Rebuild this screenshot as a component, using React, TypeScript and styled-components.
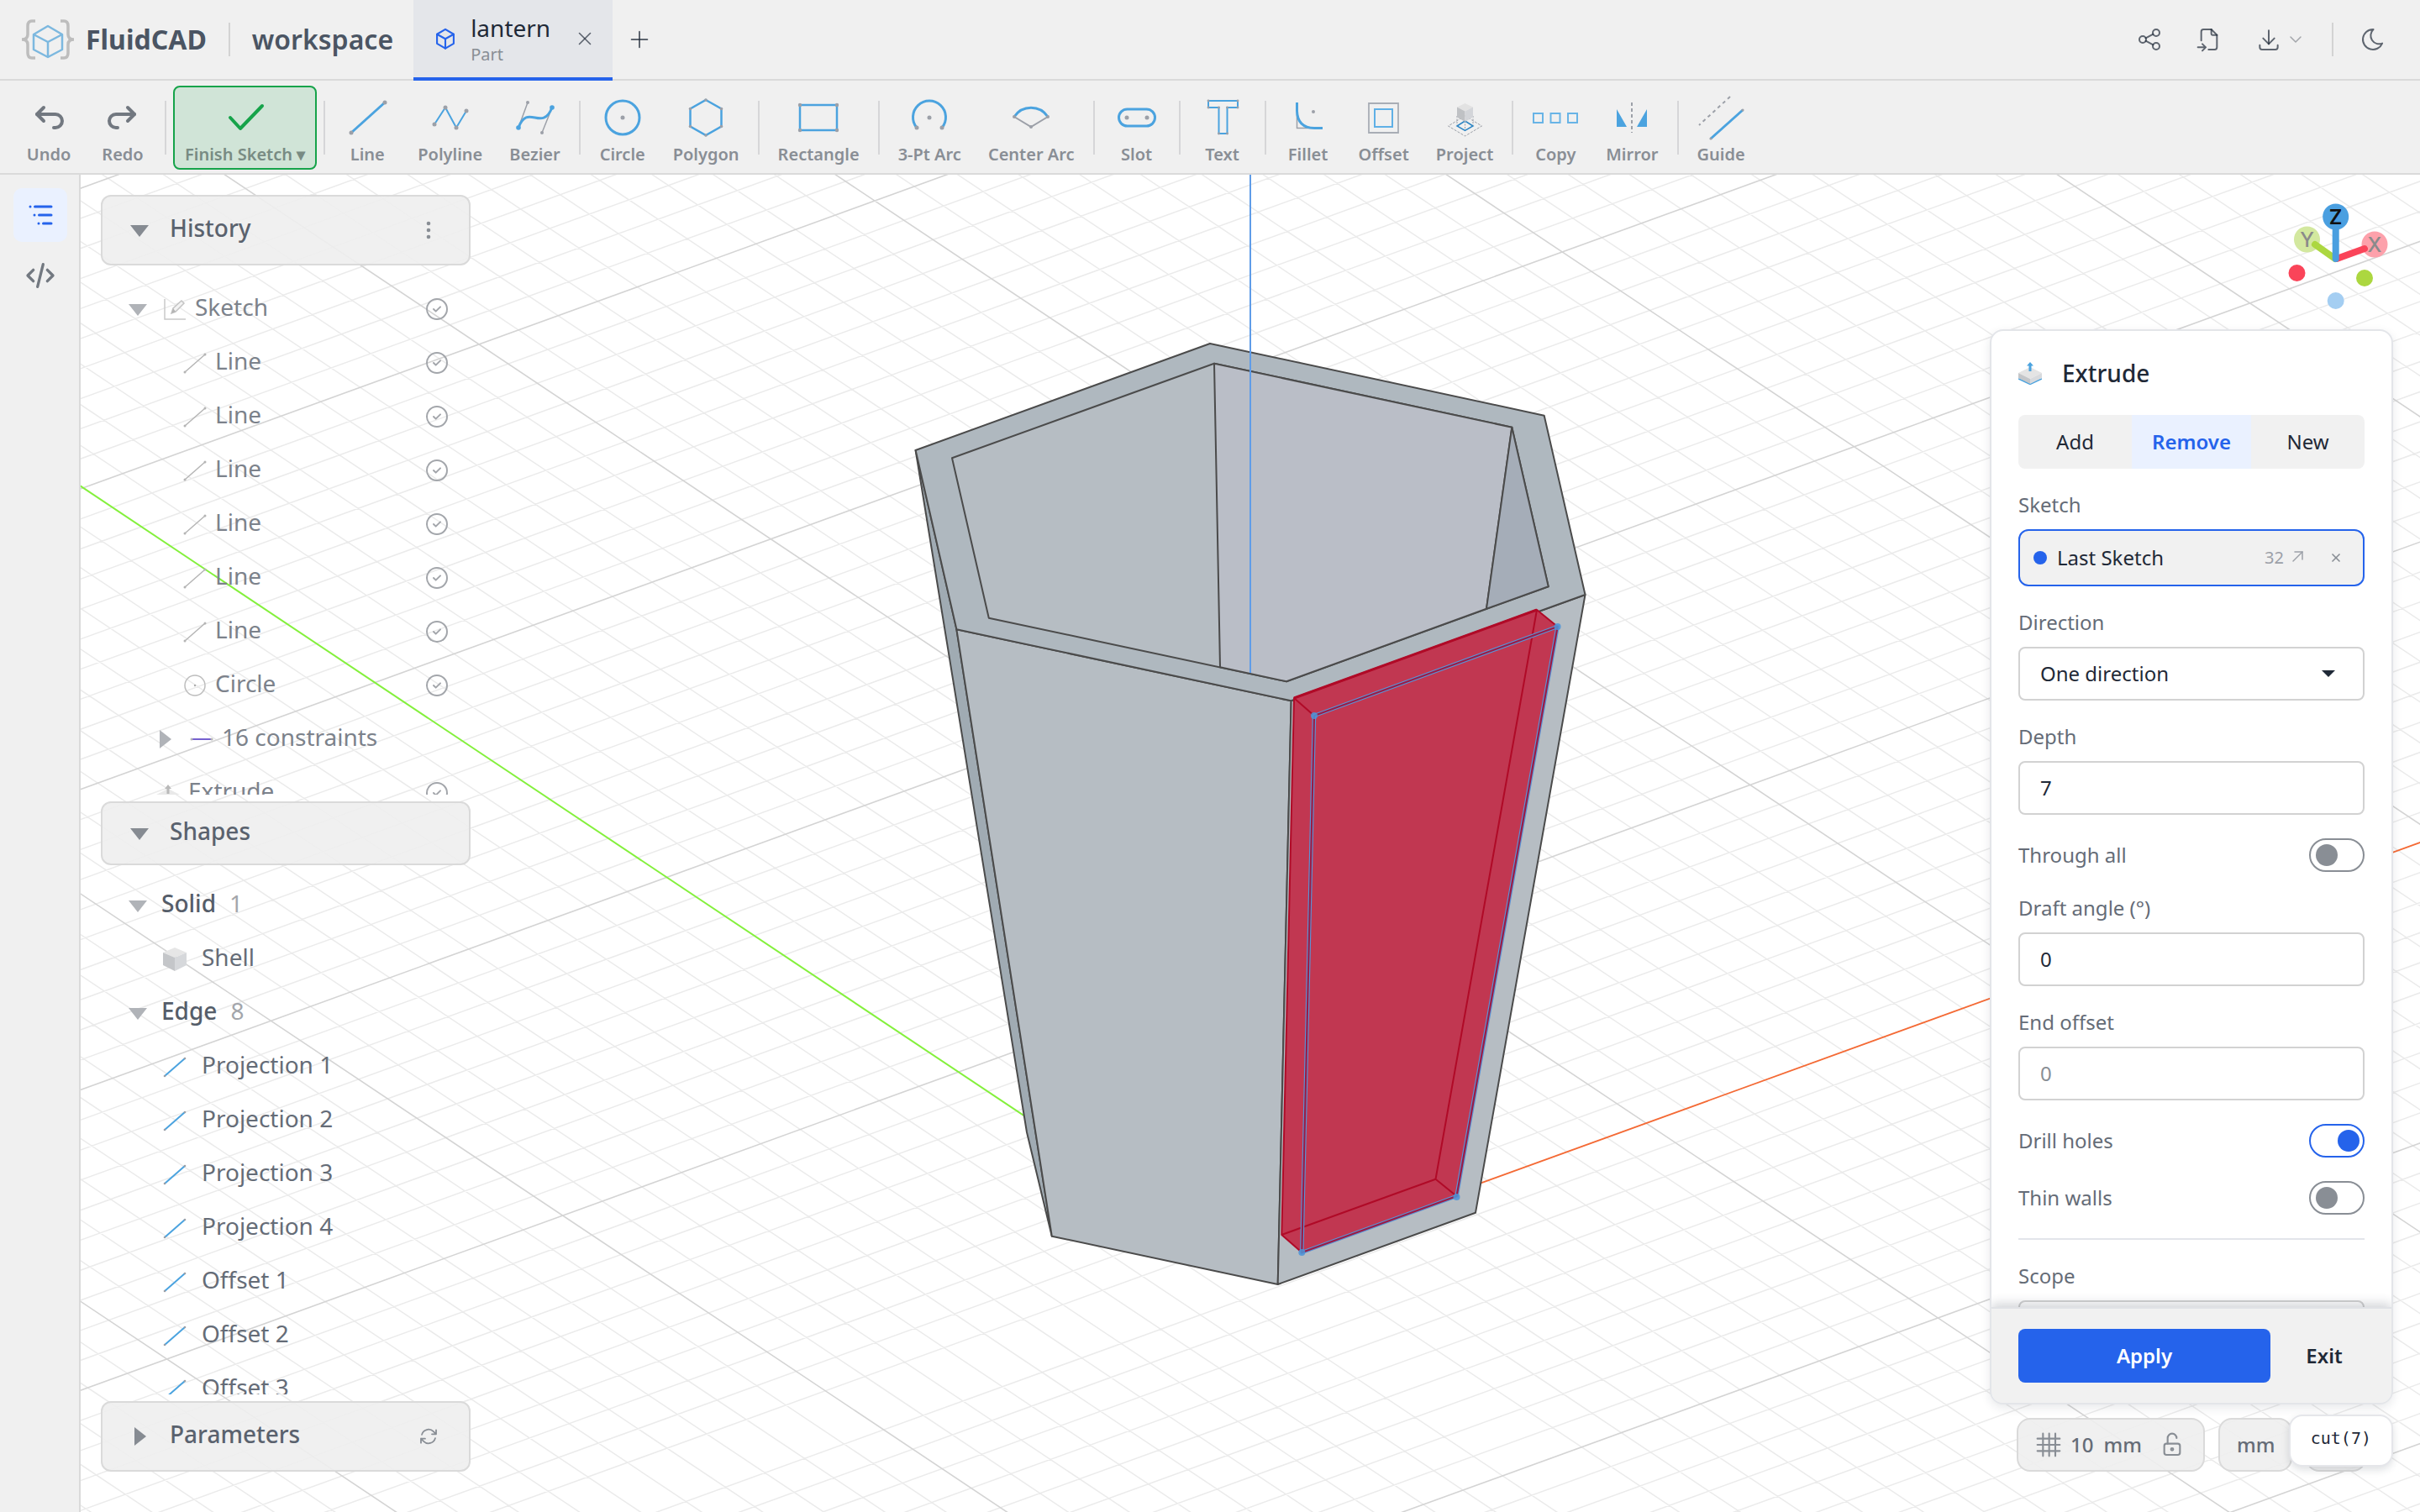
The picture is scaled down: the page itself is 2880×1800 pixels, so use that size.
import React from "react";
import styled, { createGlobalStyle } from "styled-components";

const c = {
  chrome: "#f0f0f0",
  line: "#dadada",
  ink: "#1f2937",
  text: "#4b5563",
  soft: "#656c77",
  mute: "#898e95",
  faint: "#a3a6ab",
  blue: "#2563eb",
  tint: "#eaf1ff",
  draw: "#4ba3df",
  dot: "#9ca0a8",
};

const Global = createGlobalStyle`
  *, *::before, *::after { box-sizing: border-box; }
  body { margin: 0; font-family: "Noto Sans", "Open Sans", sans-serif; font-size: 28px; color: ${c.ink}; background: #fff; }
  button, input, select { font: inherit; color: inherit; margin: 0; }
  button { border: 0; background: none; padding: 0; cursor: pointer; }
  ul { list-style: none; margin: 0; padding: 0; }
  svg { display: block; flex: none; }
`;

const Page = styled.div`
  display: grid;
  grid-template-rows: auto auto minmax(0, 1fr);
  height: 100vh;
`;

/* ---------- icons ---------- */

const Icon = ({ size = 32, stroke = 1.5, paths }: { size?: number; stroke?: number; paths: string[] }) => (
  <svg width={size} height={size} viewBox="0 0 24 24" fill="none" stroke="currentColor" strokeWidth={stroke} strokeLinecap="round" strokeLinejoin="round" aria-hidden="true">
    {paths.map((d) => <path key={d} d={d} />)}
  </svg>
);

const P = {
  share: ["M3 12a3 3 0 1 0 6 0a3 3 0 1 0 -6 0", "M15 6a3 3 0 1 0 6 0a3 3 0 1 0 -6 0", "M15 18a3 3 0 1 0 6 0a3 3 0 1 0 -6 0", "M8.7 10.7l6.6 -3.4", "M8.7 13.3l6.6 3.4"],
  fileImport: ["M14 3v4a1 1 0 0 0 1 1h4", "M5 13v-8a2 2 0 0 1 2 -2h7l5 5v11a2 2 0 0 1 -2 2h-5.5m-9.5 -2h7m-3 -3l3 3l-3 3"],
  download: ["M4 17v2a2 2 0 0 0 2 2h12a2 2 0 0 0 2 -2v-2", "M7 11l5 5l5 -5", "M12 4v12"],
  chevron: ["M6 9l6 6l6 -6"],
  moon: ["M12 3c.132 0 .263 0 .393 0a7.5 7.5 0 0 0 7.92 12.446a9 9 0 1 1 -8.313 -12.454z"],
  plus: ["M12 5v14", "M5 12h14"],
  close: ["M18 6l-12 12", "M6 6l12 12"],
  undo: ["M9 14l-4 -4l4 -4", "M5 10h11a4 4 0 1 1 0 8h-1"],
  redo: ["M15 14l4 -4l-4 -4", "M19 10h-11a4 4 0 1 0 0 8h1"],
  code: ["M7 8l-4 4l4 4", "M17 8l4 4l-4 4", "M14 4l-4 16"],
  checked: ["M3 12a9 9 0 1 0 18 0a9 9 0 1 0 -18 0", "M9 12l2 2l4 -4"],
  cube: ["M12 2.5l8.5 5v9.5l-8.5 5l-8.5 -5v-9.5z", "M12 12.2l8.5 -4.7", "M12 12.2v9.8", "M12 12.2l-8.5 -4.7"],
  refresh: ["M16.023 9.348h4.992v-.001M2.985 19.644v-4.992m0 0h4.992m-4.993 0 3.181 3.183a8.25 8.25 0 0 0 13.803-3.7M4.031 9.865a8.25 8.25 0 0 1 13.803-3.7l3.181 3.182m0-4.991v4.99"],
  grid: ["M7 2v20", "M12.5 2v20", "M18 2v20", "M2 6.5h20", "M2 12h20", "M2 17.5h20"],
  unlock: ["M5 13a2 2 0 0 1 2 -2h10a2 2 0 0 1 2 2v6a2 2 0 0 1 -2 2h-10a2 2 0 0 1 -2 -2z", "M11 16a1 1 0 1 0 2 0a1 1 0 1 0 -2 0", "M8 11v-5a4 4 0 0 1 8 0"],
  arrowOut: ["M7 17l11 -11", "M9 6h9v9"],
};

const Tool56 = ({ children }: { children: React.ReactNode }) => (
  <svg width="56" height="56" viewBox="0 0 56 56" fill="none" stroke={c.draw} strokeWidth="3" aria-hidden="true">{children}</svg>
);

const Dots = ({ at, r = 2.5 }: { at: number[][]; r?: number }) => (
  <g fill={c.dot} stroke="none">{at.map(([x, y]) => <circle key={`${x},${y}`} cx={x} cy={y} r={r} />)}</g>
);

const art: Record<string, React.ReactNode> = {
  Line: <><path d="M9 46L49 10" /><Dots at={[[9, 46], [49, 10]]} /></>,
  Polyline: <><path d="M9 36L22 16L35 40L47 20" strokeWidth="2" /><Dots at={[[9, 36], [22, 16], [35, 40], [47, 20]]} /></>,
  Bezier: (
    <>
      <path d="M8 40L19 10M48 16L36 46" stroke={c.dot} strokeWidth="1.5" />
      <path d="M8 40C19 10 36 46 48 16" />
      <Dots at={[[19, 10], [36, 46]]} r={2} />
      <g fill={c.draw} stroke="none"><circle cx="8" cy="40" r="2.8" /><circle cx="48" cy="16" r="2.8" /></g>
    </>
  ),
  Circle: <><circle cx="28" cy="28" r="20" /><Dots at={[[28, 28]]} /></>,
  Polygon: <><path d="M28 7L46.500 17.500V38.500L28 49L9.500 38.500V17.500Z" strokeWidth="2.500" /><Dots r={1.8} at={[[28, 7], [46.5, 17.5], [46.5, 38.5], [28, 49], [9.5, 38.5], [9.5, 17.5]]} /></>,
  Rectangle: <><path d="M6 13H50V43H6Z" strokeWidth="2.500" /><Dots at={[[6, 13], [50, 13], [50, 43], [6, 43]]} r={2.2} /></>,
  "3-Pt Arc": <><path d="M13 40A19.500 19.500 0 1 1 43 40" /><Dots at={[[13, 40], [43, 40], [28, 28]]} /></>,
  "Center Arc": <><path d="M8 27L28 39L48 27" stroke={c.dot} strokeWidth="2" /><path d="M8 27A24 24 0 0 1 48 27" /><Dots at={[[28, 39], [8, 27], [48, 27]]} r={2} /></>,
  Slot: <><rect x="6.500" y="18" width="43" height="20" rx="10" /><Dots at={[[16, 28], [40, 28]]} /></>,
  Text: <><path d="M11 8H46V16H33.500V47H23.500V16H11Z" strokeWidth="2" /><Dots at={[[11, 8], [46, 8], [46, 16], [33.5, 16], [33.5, 47], [23.5, 47], [23.5, 16], [11, 16]]} r={1.4} /></>,
  Fillet: <><path d="M14.500 22V40.500H34" stroke={c.dot} strokeWidth="1.500" /><path d="M14.500 10V20Q15 40 35 40.500H45" /><Dots at={[[34, 21]]} r={2} /></>,
  Offset: <><path d="M10 11H45V46H10Z" stroke="#a8adb5" strokeWidth="1.800" /><path d="M17 18H38V39H17Z" strokeWidth="2" stroke="#5fb0e6" /></>,
  Project: (
    <g strokeWidth="1">
      <path d="M28.500 26L48.500 38L28.500 50L8.500 38Z" stroke={c.dot} strokeDasharray="3 1.500" />
      <path d="M19 26V37M38 26V37M28.500 32V43" stroke={c.dot} strokeDasharray="2 1.500" />
      <path d="M28.500 32L38 38L28.500 43.500L19 38Z" strokeWidth="1.500" stroke="#2f86c4" />
      <path d="M28.500 11L38 15.500L28.500 20.500L19 15.500Z" fill="#e2e2e2" stroke="none" />
      <path d="M19 15.500L28.500 20.500V33L19 27.500Z" fill="#bfc1c4" stroke="none" />
      <path d="M38 15.500L28.500 20.500V33L38 27.500Z" fill="#d3d5d9" stroke="none" />
    </g>
  ),
  Copy: <g strokeWidth="2" stroke="#68b4e6"><path d="M2 23H13V34H2ZM22.500 23H33.500V34H22.500ZM43 23H54V34H43Z" /></g>,
  Mirror: <><path d="M10 18V39H22ZM46 18V39H34Z" fill={c.draw} stroke="none" /><path d="M28 10V46" stroke={c.dot} strokeWidth="2" strokeDasharray="4 3" /></>,
  Guide: <><path d="M39 3L2 37" stroke={c.dot} strokeWidth="2" strokeDasharray="4 4" /><path d="M54 19L16 53" /><Dots at={[[54, 19], [16, 53]]} r={1.6} /></>,
};

/* ---------- header ---------- */

const Header = styled.header`
  display: flex;
  align-items: center;
  height: 96px;
  padding: 0 40px 0 24px;
  background: ${c.chrome};
  border-bottom: 2px solid ${c.line};
`;

const Brand = styled.div<{ $weight: number }>`
  font-size: 32px;
  line-height: 48px;
  font-weight: ${(p) => p.$weight};
  color: ${c.text};
`;

const Rule = styled.span<{ $gap: number }>`
  width: 2px;
  height: 40px;
  margin: 0 ${(p) => p.$gap}px;
  background: #d3d3d3;
`;

const Tab = styled.div`
  display: flex;
  align-items: center;
  align-self: stretch;
  gap: 16px;
  margin: 0 16px -2px 24px;
  padding: 0 20px 0 24px;
  background: #e4e6ea;
  border-bottom: 4px solid ${c.blue};
  color: ${c.blue};
`;

const TabText = styled.div`
  display: grid;
  gap: 2px;
  margin-right: 12px;
  color: ${c.ink};
  font-size: 28px;
  line-height: 36px;
`;

const TabKind = styled.span`
  font-size: 20px;
  line-height: 24px;
  color: ${c.mute};
`;

const Plain = styled.button`
  display: flex;
  align-items: center;
  gap: 4px;
  color: rgba(31, 41, 55, 0.7);
`;

const Faint = styled.span`
  color: ${c.faint};
`;

const Actions = styled.div`
  display: flex;
  align-items: center;
  gap: 39px;
  margin-left: auto;
`;

const Logo = () => (
  <svg width="66" height="48" viewBox="0 0 66 48" fill="none" aria-hidden="true">
    <g stroke="#bdbdbd" strokeWidth="3.500">
      <path d="M18 2H14Q9 2 9 8V18Q9 24 2 24Q9 24 9 30V40Q9 46 14 46H18" />
      <path d="M48 2H52Q57 2 57 8V18Q57 24 64 24Q57 24 57 30V40Q57 46 52 46H48" />
    </g>
    <path d="M33 8L50 18V36L33 45L16 36V18ZM16 18L33 27L50 18M33 27V45" stroke="#7cb8df" strokeWidth="2.500" strokeLinejoin="round" />
  </svg>
);

const LogoBox = styled.a`
  display: flex;
  margin-right: 12px;
`;

/* ---------- toolbar ---------- */

const Toolbar = styled.nav`
  display: flex;
  align-items: center;
  gap: 4px;
  height: 112px;
  padding: 6px 16px 4px;
  background: ${c.chrome};
  border-bottom: 2px solid ${c.line};
`;

const Tool = styled.button<{ $on?: boolean }>`
  display: flex;
  flex-direction: column;
  align-items: center;
  gap: 4px;
  padding: 8px 12px 4px;
  border: 2px solid ${(p) => (p.$on ? "#16a34a" : "transparent")};
  border-radius: 8px;
  background: ${(p) => (p.$on ? "#d0e4d7" : "transparent")};
  color: ${(p) => (p.$on ? "#788b83" : c.mute)};
  font-size: 20px;
  line-height: 24px;
  font-weight: 600;
  white-space: nowrap;
`;

const Glyph = styled.span`
  display: grid;
  place-items: center;
  width: 56px;
  height: 56px;
  color: #727880;
`;

const Sep = styled.span`
  width: 2px;
  height: 64px;
  margin: 0 4px;
  background: #d6d6d8;
`;

const groups = [
  ["Line", "Polyline", "Bezier"],
  ["Circle", "Polygon"],
  ["Rectangle"],
  ["3-Pt Arc", "Center Arc"],
  ["Slot"],
  ["Text"],
  ["Fillet", "Offset", "Project"],
  ["Copy", "Mirror"],
  ["Guide"],
];

/* ---------- workspace ---------- */

const Body = styled.div`
  display: flex;
  min-height: 0;
`;

const Side = styled.aside`
  display: flex;
  flex-direction: column;
  gap: 8px;
  width: 96px;
  padding: 16px 0 0 16px;
  background: ${c.chrome};
  border-right: 2px solid ${c.line};
`;

const SideButton = styled.button<{ $on?: boolean }>`
  display: grid;
  place-items: center;
  width: 64px;
  height: 64px;
  border-radius: 10px;
  background: ${(p) => (p.$on ? c.tint : "transparent")};
  color: ${(p) => (p.$on ? c.blue : "#727880")};
`;

const Stage = styled.main`
  position: relative;
  flex: 1;
  min-width: 0;
  overflow: hidden;
`;

const Scene = styled.svg`
  position: absolute;
  inset: 0;
  width: 100%;
  height: 100%;
`;

const Overlay = styled.div`
  position: relative;
  display: flex;
  justify-content: space-between;
  height: 100%;
  padding: 24px 32px 48px 24px;
`;

const Column = styled.div<{ $width: number }>`
  display: flex;
  flex-direction: column;
  width: ${(p) => p.$width}px;
  min-height: 0;
`;

const PanelHead = styled.div<{ $tall?: boolean }>`
  display: flex;
  align-items: center;
  flex: none;
  height: ${(p) => (p.$tall ? 84 : 76)}px;
  padding: 0 36px 0 30px;
  border: 2px solid ${c.line};
  border-radius: 12px;
  background: rgba(238, 238, 238, 0.9);
  color: ${c.mute};
`;

const PanelToggle = styled.button`
  display: flex;
  align-items: center;
  gap: 22px;
  flex: 1;
  text-align: left;
  line-height: 36px;
  color: #5a626e;
  font-weight: 500;
`;

const Tree = styled.ul<{ $top: number }>`
  flex: 1 1 0;
  min-height: 0;
  overflow: hidden;
  margin-bottom: 8px;
  & > li:first-child { margin-top: ${(p) => p.$top}px; }
`;

const Row = styled.li<{ $indent: number; $tone?: string; $weight?: number }>`
  display: flex;
  align-items: center;
  height: 64px;
  padding-left: ${(p) => p.$indent}px;
  padding-right: 24px;
  color: ${(p) => p.$tone || "#7c828b"};
  font-weight: ${(p) => p.$weight || 400};
`;

const Slot28 = styled.span<{ $gap: number }>`
  display: grid;
  place-items: center;
  width: 28px;
  height: 64px;
  margin-right: ${(p) => p.$gap}px;
  color: ${c.faint};
`;

const Label = styled.span`
  line-height: 36px;
  padding-bottom: 6px;
`;

const Count = styled(Label)`
  margin-left: 16px;
  font-weight: 400;
  color: ${c.faint};
`;

const RowAction = styled.button`
  margin-left: auto;
  color: ${c.faint};
`;

const Caret = ({ open = true, tone = "#b0b3b8" }: { open?: boolean; tone?: string }) => (
  <svg width="28" height="28" viewBox="0 0 28 28" fill={tone} aria-hidden="true">
    <path d={open ? "M3 8H25L14 22Z" : "M8 3L22 14L8 25Z"} />
  </svg>
);

const Mark = ({ kind }: { kind: string }) => (
  <svg width="28" height="28" viewBox="0 0 28 28" fill="none" strokeWidth="1.500" aria-hidden="true">
    {kind === "line" && <><path d="M2 25L26 4" stroke="#b5b5b5" /><g fill="#b5b5b5"><circle cx="2" cy="25" r="1.500" /><circle cx="26" cy="4" r="1.500" /></g></>}
    {kind === "edge" && <><path d="M2 25L26 4" stroke={c.draw} strokeWidth="2" /><g fill={c.dot}><circle cx="2" cy="25" r="1.300" /><circle cx="26" cy="4" r="1.300" /></g></>}
    {kind === "circle" && <><circle cx="14" cy="14" r="12" stroke="#bdbdbd" /><circle cx="14" cy="14" r="1.200" fill="#aaa" /></>}
    {kind === "sketch" && <><path d="M2 2V26H27" stroke="#c9c9c9" /><path d="M10 19L12 13L22 4L25 7L15 17Z" stroke="#c4c4c4" fill="#f3f3f3" /><path d="M10 19L12 13L15 17Z" fill="#b5b5b5" /></>}
    {kind === "rule" && <><path d="M2 14H26" stroke="#7560cf" strokeWidth="2" /><g fill="#b5b5b5"><circle cx="2" cy="14" r="1.500" /><circle cx="26" cy="14" r="1.500" /></g></>}
    {kind === "solid" && <><path d="M14 0L28 6L14 12L0 6Z" fill="#e6e6e6" /><path d="M0 6L14 12V28L0 21Z" fill="#c4c6c9" /><path d="M28 6L14 12V28L28 21Z" fill="#d6d8db" /></>}
    {kind === "extrude" && <><path d="M0 16L14 9L28 16L14 23Z" fill="#e9e9e9" /><path d="M0 16L14 23V28L0 21Z" fill="#d0d0d0" /><path d="M28 16L14 23V28L28 21Z" fill="#dedede" /><path d="M14 4L18 9H15.500V15H12.500V9H10Z" fill="#b9b9b9" /></>}
    {kind === "extrudeColor" && <><path d="M0 21L14 27.500L28 21L14 26Z" fill={c.draw} stroke={c.draw} /><path d="M0 14L14 7L28 14L14 21Z" fill="#e4e4e4" /><path d="M0 14L14 21V27L0 20Z" fill="#c4c6c9" /><path d="M28 14L14 21V27L28 20Z" fill="#d8dadd" /><path d="M14 1L18 5.500H15.500V12H12.500V5.500H10Z" fill={c.draw} /></>}
  </svg>
);

const History = () => (
  <Tree $top={20}>
    <Row $indent={30}>
      <Slot28 $gap={16}><Caret /></Slot28>
      <Slot28 $gap={10}><Mark kind="sketch" /></Slot28>
      <Label>Sketch</Label>
      <RowAction aria-label="Toggle Sketch"><Icon paths={P.checked} /></RowAction>
    </Row>
    {["Line", "Line", "Line", "Line", "Line", "Line", "Circle"].map((name, i) => (
      <Row key={i} $indent={98}>
        <Slot28 $gap={10}><Mark kind={name.toLowerCase()} /></Slot28>
        <Label>{name}</Label>
        <RowAction aria-label={`Toggle ${name}`}><Icon paths={P.checked} /></RowAction>
      </Row>
    ))}
    <Row $indent={62}>
      <Slot28 $gap={16}><Caret open={false} /></Slot28>
      <Slot28 $gap={10}><Mark kind="rule" /></Slot28>
      <Label>16 constraints</Label>
    </Row>
    <Row $indent={66}>
      <Slot28 $gap={10}><Mark kind="extrude" /></Slot28>
      <Label>Extrude</Label>
      <RowAction aria-label="Toggle Extrude"><Icon paths={P.checked} /></RowAction>
    </Row>
  </Tree>
);

const ShapeGroup = ({ name, count }: { name: string; count: number }) => (
  <Row $indent={30} $tone="#555d69" $weight={500}>
    <Slot28 $gap={14}><Caret /></Slot28>
    <Label>{name}</Label>
    <Count>{count}</Count>
  </Row>
);

const ShapeItem = ({ name, kind }: { name: string; kind: string }) => (
  <Row $indent={74} $tone={c.soft}>
    <Slot28 $gap={18}><Mark kind={kind} /></Slot28>
    <Label>{name}</Label>
  </Row>
);

const edges = ["Projection 1", "Projection 2", "Projection 3", "Projection 4", "Offset 1", "Offset 2", "Offset 3"];

/* ---------- 3D scene ---------- */

const ORIGIN = { x: 1488, y: 1508 };
const CELL = 58.52;
const EX = { x: 0.8049 * CELL, y: -0.292 * CELL };
const EY = { x: -0.5934 * CELL, y: -0.3961 * CELL };

const gridPath = (major: boolean) => {
  const out: string[] = [];
  for (let i = -70; i <= 70; i++) {
    if (i === 0 || (i % 10 === 0) !== major) continue;
    const seg = (a: typeof EX, b: typeof EX) => {
      const bx = ORIGIN.x + a.x * i;
      const by = ORIGIN.y + a.y * i;
      out.push(`M${(bx - b.x * 80).toFixed(1)} ${(by - b.y * 80).toFixed(1)}L${(bx + b.x * 80).toFixed(1)} ${(by + b.y * 80).toFixed(1)}`);
    };
    seg(EX, EY);
    seg(EY, EX);
  }
  return out.join("");
};

const axisEnd = (v: typeof EX, n: number) => ({ x: ORIGIN.x + v.x * n, y: ORIGIN.y + v.y * n });
const xEnd = axisEnd(EX, 60);
const yEnd = axisEnd(EY, 60);

const Lantern = () => (
  <g strokeLinejoin="round">
    <g stroke="#4b4b4b" strokeWidth="2">
      <path d="M1089.600 536L1138.400 749.300L1251.800 1471.700L1222 1348Z" fill="#a0abb3" />
      <path d="M1138.400 749.300L1536.600 834.300L1520.700 1529L1251.800 1471.700Z" fill="#b6bdc3" />
      <path d="M1536.600 834.300L1886.500 708L1756 1443.700L1520.700 1529Z" fill="#b6bdc3" />
      <path d="M1440 409L1837.700 494.700L1886.500 708L1536.600 834.300L1138.400 749.300L1089.600 536Z" fill="#afb8bf" />
      <path d="M1445 432.700L1799.300 508.700L1842.700 698.300L1531 811.300L1176.800 735.700L1133 545.300Z" fill="#b6bdc3" />
      <path d="M1445 432.700L1799.300 508.700L1769 724.700L1531 811.300L1452 794.300Z" fill="#babec7" />
      <path d="M1799.300 508.700L1842.700 698.300L1769 724.700Z" fill="#a5adb8" />
    </g>
    <path d="M1488 208V801" stroke="#5f9ce8" strokeWidth="2" />
    <path d="M1540 831L1829 726L1853.600 746L1733.500 1424L1549.300 1491L1525.300 1470Z" fill="#c13751" />
    <g fill="none" stroke="#b00a27" strokeWidth="2">
      <path d="M1540 831L1829 726L1853.600 746M1829 726L1708.500 1403.700L1525.300 1470L1540 831L1564 852M1708.500 1403.700L1733.500 1424M1525.300 1470L1549.300 1491" />
      <path d="M1540 831L1829 726" strokeWidth="3" />
      <path d="M1564 852L1853.600 746L1733.500 1424L1549.300 1491Z" stroke="#5b93d6" strokeWidth="4.500" />
      <path d="M1564 852L1853.600 746L1733.500 1424L1549.300 1491Z" stroke="#9c1b44" strokeWidth="2.200" />
    </g>
    <g fill="#4d95d8" opacity="0.85">
      <circle cx="1564" cy="852" r="4" /><circle cx="1853.600" cy="746" r="4" /><circle cx="1733.500" cy="1425" r="4" /><circle cx="1549.300" cy="1491" r="4" />
    </g>
  </g>
);

const Viewport = () => (
  <Scene viewBox="96 208 2784 1592" preserveAspectRatio="xMidYMid slice" aria-label="3D viewport">
    <path d={gridPath(false)} stroke="#ebebeb" strokeWidth="1.500" />
    <path d={gridPath(true)} stroke="#d4d4d4" strokeWidth="1.600" />
    <path d={`M${ORIGIN.x} ${ORIGIN.y}L${yEnd.x} ${yEnd.y}`} stroke="#84f03c" strokeWidth="2" />
    <path d={`M${ORIGIN.x} ${ORIGIN.y}L${xEnd.x} ${xEnd.y}`} stroke="#f46a35" strokeWidth="1.800" />
    <Lantern />
  </Scene>
);

const GizmoBox = styled.div`
  display: flex;
  justify-content: flex-end;
  flex: none;
  height: 160px;
`;

const Gizmo = () => (
  <svg width="136" height="160" viewBox="2712 232 136 160" fontFamily='Inter, "Liberation Sans", sans-serif' fontSize="24" textAnchor="middle" aria-label="View orientation">
    <circle cx="2745.500" cy="285" r="15.500" fill="#d3e89f" />
    <circle cx="2826" cy="291" r="15.500" fill="#fda1ab" />
    <text x="2745.500" y="294" fill="#8a8a8a" fontWeight="500">Y</text>
    <text x="2826" y="300" fill="#8a8a8a" fontWeight="500">X</text>
    <g strokeWidth="8" strokeLinecap="round">
      <path d="M2755 291L2779 308" stroke="#acd740" />
      <path d="M2814 296L2781 308" stroke="#fa4459" />
      <path d="M2779.700 262V308" stroke="#4a9fe0" />
    </g>
    <circle cx="2779.700" cy="258" r="15.500" fill="#4a9fe0" />
    <text x="2779.700" y="267" fill="#111" fontWeight="600">Z</text>
    <circle cx="2733.500" cy="325" r="10" fill="#fa4459" />
    <circle cx="2814" cy="331" r="10" fill="#acd740" />
    <circle cx="2779.700" cy="358" r="10" fill="#a4cef2" />
  </svg>
);

/* ---------- extrude panel ---------- */

const Card = styled.section`
  display: flex;
  flex-direction: column;
  flex: 1;
  min-height: 0;
  overflow: hidden;
  border: 2px solid #e3e5e9;
  border-radius: 16px;
  background: #fff;
  box-shadow: 0 4px 12px rgba(30, 40, 60, 0.1);
  font-size: 24px;
  margin-bottom: 16px;
`;

const Form = styled.form`
  display: flex;
  flex-direction: column;
  gap: 28px;
  flex: 1;
  min-height: 0;
  overflow: hidden;
  padding: 32px 32px 0;
  & > * { flex: none; }
`;

const Title = styled.h2`
  display: flex;
  align-items: center;
  gap: 24px;
  margin: 0 0 4px;
  font-size: 28px;
  line-height: 36px;
  font-weight: 500;
`;

const Segments = styled.div`
  display: flex;
  height: 64px;
  overflow: hidden;
  border-radius: 8px;
  background: #f1f1f1;
`;

const Segment = styled.button<{ $on?: boolean }>`
  flex: 1 1 0;
  padding: 0 24px 2px;
  background: ${(p) => (p.$on ? c.tint : "transparent")};
  color: ${(p) => (p.$on ? c.blue : c.ink)};
  font-weight: ${(p) => (p.$on ? 600 : 400)};
`;

const Field = styled.div`
  display: grid;
  gap: 14px;
`;

const FieldLabel = styled.label`
  line-height: 30px;
  color: ${c.soft};
`;

const control = `
  width: 100%;
  height: 64px;
  padding: 0 24px 2px;
  border: 2px solid #d2d2d2;
  border-radius: 8px;
  background: #fff;
  outline: 0;
`;

const Input = styled.input`
  ${control}
  &::placeholder { color: ${c.mute}; opacity: 1; }
`;

const SelectWrap = styled.div`
  display: grid;
  align-items: center;
  & > * { grid-area: 1 / 1; }
  & > svg { justify-self: end; margin-right: 35px; pointer-events: none; }
`;

const Select = styled.select`
  ${control}
  appearance: none;
`;

const Pick = styled.div`
  display: flex;
  align-items: center;
  height: 68px;
  padding: 0 24px 0 16px;
  border: 2px solid ${c.blue};
  border-radius: 12px;
  background: #f1f1f1;
`;

const PickName = styled.span`
  padding-bottom: 2px;
`;

const PickDot = styled.span`
  width: 16px;
  height: 16px;
  margin-right: 12px;
  border-radius: 50%;
  background: ${c.blue};
`;

const PickRef = styled.button`
  display: flex;
  align-items: center;
  gap: 4px;
  margin: 0 26px 0 auto;
  padding-bottom: 2px;
  font-size: 20px;
  color: ${c.dot};
`;

const PickClear = styled.button`
  color: ${c.mute};
`;

const SwitchRow = styled.label`
  display: flex;
  align-items: center;
  justify-content: space-between;
  height: 40px;
  color: ${c.soft};
`;

const Caption = styled.span`
  padding-bottom: 2px;
`;

const Switch = styled.input.attrs({ type: "checkbox", role: "switch" })`
  appearance: none;
  display: flex;
  align-items: center;
  width: 66px;
  height: 40px;
  padding: 0 4px 0 6px;
  border: 2px solid ${c.mute};
  border-radius: 20px;
  &::before { content: ""; width: 26px; height: 26px; border-radius: 50%; background: ${c.mute}; }
  &:checked { justify-content: flex-end; border-color: ${c.blue}; }
  &:checked::before { background: ${c.blue}; }
`;

const Divider = styled.hr`
  width: 100%;
  height: 2px;
  margin: 0;
  border: 0;
  background: #e3e5ea;
`;

const Footer = styled.footer`
  position: relative;
  display: flex;
  gap: 16px;
  padding: 24px 32px;
  border-top: 2px solid #e0e2e6;
  background: #f1f1f1;
  box-shadow: 0 -4px 12px rgba(30, 40, 60, 0.2);
`;

const Apply = styled.button`
  flex: 1;
  height: 64px;
  padding-bottom: 2px;
  border-radius: 8px;
  background: ${c.blue};
  color: #fff;
  font-weight: 600;
`;

const Exit = styled.button`
  width: 96px;
  padding-bottom: 2px;
  font-weight: 600;
`;

const StatusBar = styled.div`
  position: relative;
  display: flex;
  justify-content: space-between;
  flex: none;
  height: 64px;
  padding: 0 32px;
`;

const Pill = styled.button<{ $width?: number }>`
  display: flex;
  align-items: center;
  width: ${(p) => (p.$width ? `${p.$width}px` : "auto")};
  padding: 0 20px;
  border: 2px solid ${c.line};
  border-radius: 16px;
  background: rgba(238, 238, 238, 0.9);
  color: ${c.mute};
  font-size: 24px;
  font-weight: 500;
`;

const PillText = styled.span<{ $before?: number; $after?: number }>`
  margin-left: ${(p) => p.$before || 0}px;
  margin-right: ${(p) => p.$after || 0}px;
  padding-bottom: 2px;
  color: ${c.soft};
`;

const Tip = styled.output`
  position: absolute;
  top: -4px;
  right: 0;
  padding: 12px 24px 18px;
  border: 2px solid #e5e6ea;
  border-radius: 16px;
  background: #fff;
  box-shadow: 0 4px 10px rgba(30, 40, 60, 0.14);
  font: 20px/28px "DejaVu Sans Mono", monospace;
`;

const NumberField = ({ id, label, value, placeholder }: { id: string; label: string; value?: string; placeholder?: string }) => (
  <Field>
    <FieldLabel htmlFor={id}>{label}</FieldLabel>
    <Input id={id} inputMode="decimal" defaultValue={value} placeholder={placeholder} />
  </Field>
);

const Toggle = ({ label, on }: { label: string; on?: boolean }) => (
  <SwitchRow>
    <Caption>{label}</Caption>
    <Switch defaultChecked={on} />
  </SwitchRow>
);

const ExtrudePanel = () => (
  <Card>
    <Form>
      <Title><Mark kind="extrudeColor" />Extrude</Title>
      <Segments>
        <Segment type="button">Add</Segment>
        <Segment type="button" $on>Remove</Segment>
        <Segment type="button">New</Segment>
      </Segments>
      <Field>
        <FieldLabel as="span">Sketch</FieldLabel>
        <Pick>
          <PickDot />
          <PickName>Last Sketch</PickName>
          <PickRef type="button">32<Icon size={24} stroke={1.5} paths={P.arrowOut} /></PickRef>
          <PickClear type="button" aria-label="Clear sketch"><Icon size={16} stroke={2.5} paths={P.close} /></PickClear>
        </Pick>
      </Field>
      <Field>
        <FieldLabel htmlFor="direction">Direction</FieldLabel>
        <SelectWrap>
          <Select id="direction" defaultValue="one">
            <option value="one">One direction</option>
          </Select>
          <svg width="16" height="8" viewBox="0 0 16 8" fill={c.ink}><path d="M0 0H16L8 8Z" /></svg>
        </SelectWrap>
      </Field>
      <NumberField id="depth" label="Depth" value="7" />
      <Toggle label="Through all" />
      <NumberField id="draft" label="Draft angle (°)" value="0" />
      <NumberField id="end" label="End offset" placeholder="0" />
      <Toggle label="Drill holes" on />
      <Toggle label="Thin walls" />
      <Divider />
      <NumberField id="scope" label="Scope" />
    </Form>
    <Footer>
      <Apply>Apply</Apply>
      <Exit>Exit</Exit>
    </Footer>
  </Card>
);

export default function App() {
  return (
    <Page>
      <Global />
      <Header>
        <LogoBox href="#" aria-label="FluidCAD home"><Logo /></LogoBox>
        <Brand $weight={700}>FluidCAD</Brand>
        <Rule $gap={26} />
        <Brand $weight={600}>workspace</Brand>
        <Tab>
          <Icon size={28} stroke={1.8} paths={P.cube} />
          <TabText>lantern<TabKind>Part</TabKind></TabText>
          <Plain aria-label="Close tab"><Icon size={26} paths={P.close} /></Plain>
        </Tab>
        <Plain aria-label="New tab"><Icon size={32} paths={P.plus} /></Plain>
        <Actions>
          <Plain aria-label="Share"><Icon paths={P.share} /></Plain>
          <Plain aria-label="Import"><Icon paths={P.fileImport} /></Plain>
          <Plain aria-label="Export"><Icon paths={P.download} /><Faint><Icon size={24} paths={P.chevron} /></Faint></Plain>
          <Rule $gap={-8} />
          <Plain aria-label="Dark mode"><Icon paths={P.moon} /></Plain>
        </Actions>
      </Header>
      <Toolbar>
        <Tool><Glyph><Icon size={48} stroke={2} paths={P.undo} /></Glyph>Undo</Tool>
        <Tool><Glyph><Icon size={48} stroke={2} paths={P.redo} /></Glyph>Redo</Tool>
        <Sep />
        <Tool $on>
          <Tool56><path d="M10 28L22 41L48 14" stroke="#16a34a" strokeWidth="4" strokeLinecap="round" strokeLinejoin="round" /></Tool56>
          <span>Finish Sketch ▾</span>
        </Tool>
        {groups.map((g) => (
          <React.Fragment key={g[0]}>
            <Sep />
            {g.map((name) => <Tool key={name}><Tool56>{art[name]}</Tool56>{name}</Tool>)}
          </React.Fragment>
        ))}
      </Toolbar>
      <Body>
        <Side>
          <SideButton $on aria-label="Model tree">
            <svg width="32" height="28" viewBox="0 0 32 28" stroke="currentColor" strokeWidth="3" strokeLinecap="round">
              <path d="M4 4h.01M9.500 4H29M9 14h.01M14.500 14H29M14 24h.01M19.500 24H29" />
            </svg>
          </SideButton>
          <SideButton aria-label="Code"><Icon size={40} stroke={2} paths={P.code} /></SideButton>
        </Side>
        <Stage>
          <Viewport />
          <Overlay>
            <Column $width={440}>
              <PanelHead $tall>
                <PanelToggle><Caret tone="#868b92" /><Label>History</Label></PanelToggle>
                <svg width="24" height="24" viewBox="0 0 24 24" fill="currentColor"><circle cx="12" cy="4" r="2.300" /><circle cx="12" cy="12" r="2.300" /><circle cx="12" cy="20" r="2.300" /></svg>
              </PanelHead>
              <History />
              <PanelHead>
                <PanelToggle><Caret tone="#868b92" /><Label>Shapes</Label></PanelToggle>
              </PanelHead>
              <Tree $top={16}>
                <ShapeGroup name="Solid" count={1} />
                <ShapeItem name="Shell" kind="solid" />
                <ShapeGroup name="Edge" count={8} />
                {edges.map((name) => <ShapeItem key={name} name={name} kind="edge" />)}
              </Tree>
              <PanelHead $tall>
                <PanelToggle><Caret open={false} tone="#868b92" /><Label>Parameters</Label></PanelToggle>
                <Icon size={24} stroke={1.8} paths={P.refresh} />
              </PanelHead>
            </Column>
            <Column $width={480}>
              <GizmoBox><Gizmo /></GizmoBox>
              <ExtrudePanel />
              <StatusBar>
                <Pill $width={224}>
                  <Icon size={32} stroke={1.6} paths={P.grid} />
                  <PillText $before={10} $after={12}>10</PillText>
                  <PillText $after={20}>mm</PillText>
                  <Icon size={32} stroke={1.6} paths={P.unlock} />
                </Pill>
                <Pill $width={88}><PillText>mm</PillText></Pill>
                <Pill $width={72} aria-label="View options" />
                <Tip>cut(7)</Tip>
              </StatusBar>
            </Column>
          </Overlay>
        </Stage>
      </Body>
    </Page>
  );
}
